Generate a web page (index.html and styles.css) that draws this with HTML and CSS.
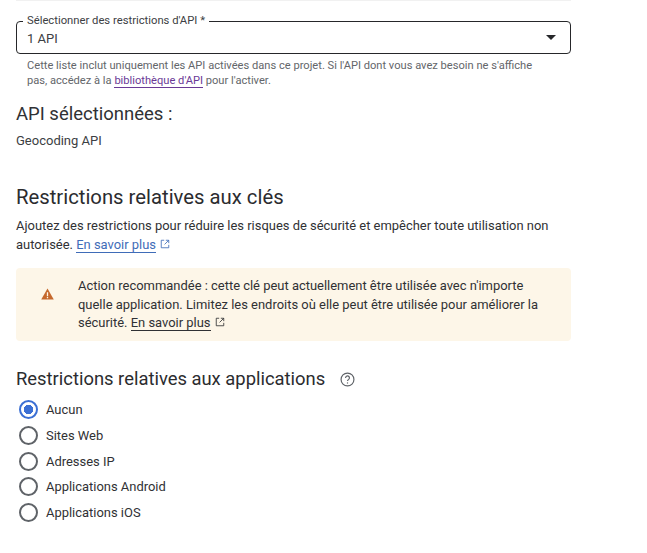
FILE: index.html
```html
<!DOCTYPE html>
<html lang="fr">
<head>
  <meta charset="UTF-8">
  <meta name="viewport" content="width=device-width, initial-scale=1.0">
  <title>Restrictions de clé API</title>
  <link rel="stylesheet" href="styles.css">
</head>
<body>
  <div id="page">
    <div class="top-rule"></div>

    <div class="select-field">
      <span class="select-label">Sélectionner des restrictions d'API *</span>
      <span class="select-value">1 API</span>
      <span class="select-arrow"></span>
    </div>
    <p class="hint">Cette liste inclut uniquement les API activées dans ce projet. Si l'API dont vous avez besoin ne s'affiche<br>pas, accédez à la <a class="visited" href="#">bibliothèque d'API</a> pour l'activer.</p>

    <h3 class="selected-title">API sélectionnées :</h3>
    <p class="selected-api">Geocoding API</p>

    <h2 class="key-title">Restrictions relatives aux clés</h2>
    <p class="intro">Ajoutez des restrictions pour réduire les risques de sécurité et empêcher toute utilisation non<br>autorisée. <a class="link" href="#">En savoir plus</a>
      <svg class="ext" viewBox="0 0 12 12"><path d="M5 1.500H1.500v9h9V7M7 1.500h3.500V5M10.500 1.500 5.500 6.500"/></svg>
    </p>

    <div class="warning">
      <svg class="warning-icon" viewBox="0 0 14 13"><path d="M7 .5 13.800 12.500H.2z" fill="#c5682c"/><path d="M6.300 4.500h1.400v4.200H6.300zM6.300 9.600h1.400V11H6.300z" fill="#fdf6e8"/></svg>
      <p>Action recommandée : cette clé peut actuellement être utilisée avec n'importe<br>quelle application. Limitez les endroits où elle peut être utilisée pour améliorer la<br>sécurité. <a class="link-dark" href="#">En savoir plus</a>
        <svg class="ext ext-dark" viewBox="0 0 12 12"><path d="M5 1.500H1.500v9h9V7M7 1.500h3.500V5M10.500 1.500 5.500 6.500"/></svg>
      </p>
    </div>

    <div class="app-head">
      <h2 class="app-title">Restrictions relatives aux applications</h2>
      <svg class="help" viewBox="0 0 14 14"><circle cx="7" cy="7" r="6"/><path d="M5.200 5.500a1.800 1.800 0 1 1 2.900 1.400c-.7.5-1.100.8-1.100 1.600"/><path d="M7 9.700v1.100"/></svg>
    </div>

    <ul class="radios">
      <li class="radio checked"><span class="circle"></span>Aucun</li>
      <li class="radio"><span class="circle"></span>Sites Web</li>
      <li class="radio"><span class="circle"></span>Adresses IP</li>
      <li class="radio"><span class="circle"></span>Applications Android</li>
      <li class="radio"><span class="circle"></span>Applications iOS</li>
    </ul>
  </div>
</body>
</html>
```

FILE: styles.css
```css
body {
    font-family: Roboto, Arial, sans-serif;
    margin: 0;
    padding: 0;
    background-color: #ffffff;
    color: #2b2c2f;
}

p, h2, h3, ul {
    margin: 0;
    padding: 0;
    font-weight: 400;
}

#page {
    width: 555px;
    padding-left: 16px;
    height: 553px;
    overflow: hidden;
}

.top-rule {
    height: 1px;
    background-color: #f1f1f1;
}

.select-field {
    position: relative;
    display: flex;
    align-items: center;
    justify-content: space-between;
    height: 31px;
    margin-top: 20px;
    padding: 0 14px 0 10px;
    border: 1px solid #26272a;
    border-radius: 4px;
}

.select-label {
    position: absolute;
    top: -7px;
    left: 6px;
    padding: 0 4px;
    background-color: #ffffff;
    font-size: 11.250px;
    line-height: 12px;
    color: #3c4043;
}

.select-value {
    font-size: 13px;
    padding-top: 1px;
    color: #3c4043;
}

.select-arrow {
    width: 0;
    height: 0;
    border-left: 5px solid transparent;
    border-right: 5px solid transparent;
    border-top: 5px solid #26272a;
}

.hint {
    margin-top: 4px;
    padding-left: 11px;
    font-size: 11.130px;
    line-height: 15px;
    color: #63666a;
}

.visited {
    color: #6a3a96;
    text-decoration: none;
    border-bottom: 1px solid #6a3a96;
}

.selected-title {
    margin-top: 14px;
    font-size: 18.500px;
    line-height: 24px;
    color: #303134;
}

.selected-api {
    margin-top: 6px;
    font-size: 13px;
    line-height: 18px;
    color: #3c4043;
}

.key-title {
    margin-top: 34px;
    font-size: 20.300px;
    line-height: 26px;
    color: #2b2c2f;
}

.intro {
    margin-top: 6px;
    font-size: 12.950px;
    line-height: 19px;
    color: #303134;
}

.link {
    color: #3f6cb8;
    text-decoration: none;
    border-bottom: 1px solid #3f6cb8;
}

.link-dark {
    color: #303134;
    text-decoration: none;
    border-bottom: 1px solid #303134;
}

.ext {
    width: 10px;
    height: 10px;
    margin-left: 1px;
    fill: none;
    stroke: #3f6cb8;
    stroke-width: 1;
}

.ext-dark {
    stroke: #303134;
}

.warning {
    display: flex;
    align-items: flex-start;
    gap: 24px;
    height: 73px;
    margin-top: 14px;
    padding: 9px 0 0 25px;
    background-color: #fdf6e8;
    border-radius: 4px;
    box-sizing: border-box;
}

.warning p {
    font-size: 12.950px;
    line-height: 18.500px;
    color: #303134;
}

.warning-icon {
    width: 13px;
    height: 12px;
    margin-top: 11px;
    flex-shrink: 0;
}

.app-head {
    display: flex;
    align-items: center;
    gap: 15px;
    margin-top: 26px;
}

.app-title {
    font-size: 18.400px;
    line-height: 24px;
    color: #2b2c2f;
}

.help {
    width: 15px;
    height: 15px;
    fill: none;
    stroke: #5f6368;
    stroke-width: 1.100;
}

.radios {
    list-style: none;
    margin-top: 6px;
    padding-left: 3px;
}

.radio {
    display: flex;
    align-items: center;
    gap: 8px;
    height: 25.700px;
    font-size: 12.950px;
    color: #303134;
}

.circle {
    width: 15px;
    height: 15px;
    border: 2px solid #5f6368;
    border-radius: 50%;
    background-color: #ffffff;
    flex-shrink: 0;
}

.checked .circle {
    border-color: #3b6fd4;
    background: radial-gradient(circle, #3b6fd4 0 4.500px, #ffffff 5px);
}
```
